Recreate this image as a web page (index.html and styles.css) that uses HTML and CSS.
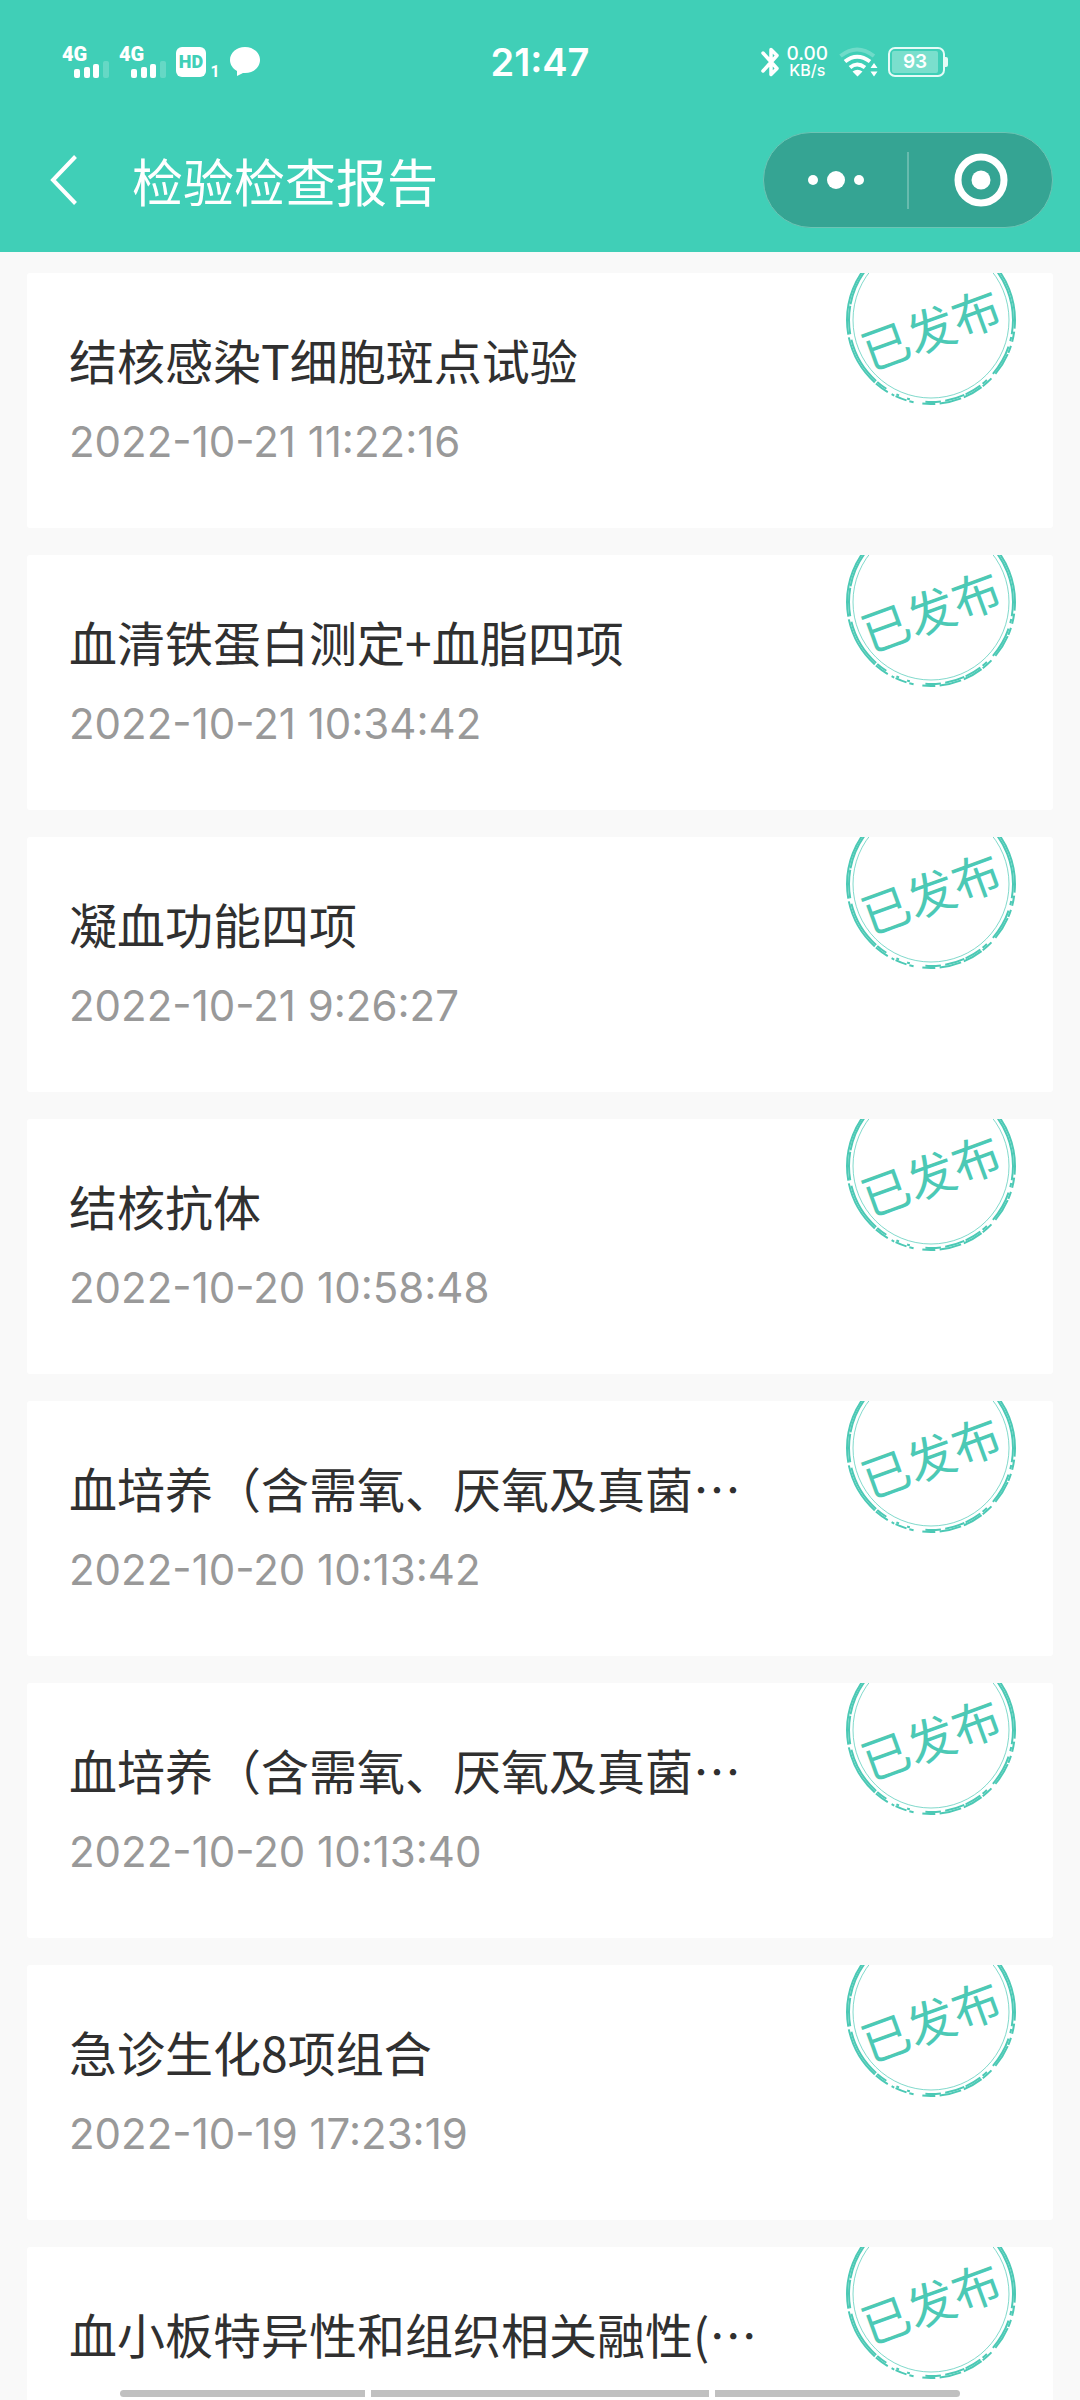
FILE: index.html
```html
<!DOCTYPE html>
<html lang="zh-CN">
<head>
    <meta charset="UTF-8">
    <meta name="viewport" content="width=device-width, initial-scale=1.0">
    <title>检验检查报告</title>
    <link rel="stylesheet" href="styles.css">
</head>
<body>
    <!-- shared stamp drawing, dashes are in degrees clockwise from 3 o'clock -->
    <svg class="defs" width="0" height="0" aria-hidden="true">
        <symbol id="stamp" viewBox="0 0 172 132">
            <g fill="none" stroke="#4cc9b5">
                <circle cx="86" cy="47" r="84" stroke-width="2" pathLength="360" stroke-dasharray="6 2 7 3 5 1 16 4 8 1 14 2 15 3 9 6 3 2 8 1 2 3 10 1 36 2 190 0"/>
                <circle cx="86" cy="47" r="82" stroke-width="2" pathLength="360" stroke-dasharray="10 2 3 4 22 6 4 2 12 1 14 3 11 11 2 6 2 8 8 1 34 4 20 1 169 0"/>
                <circle cx="86" cy="47" r="78" stroke-width="1" opacity="0.7"/>
            </g>
        </symbol>
    </svg>

    <div class="page">
        <header class="header">
            <div class="status">
                <div class="status-left">
                    <svg class="signal" width="48" height="34" viewBox="0 0 48 34">
                        <text x="0" y="16" class="net">4G</text>
                        <g fill="#fff"><rect x="12" y="24" width="6" height="9" rx="2"/><rect x="22" y="22" width="6" height="11" rx="2"/><rect x="31" y="19" width="6" height="14" rx="2"/><rect x="41" y="16" width="6" height="17" rx="2" opacity=".2"/></g>
                    </svg>
                    <svg class="signal" width="48" height="34" viewBox="0 0 48 34">
                        <text x="0" y="16" class="net">4G</text>
                        <g fill="#fff"><rect x="12" y="24" width="6" height="9" rx="2"/><rect x="22" y="22" width="6" height="11" rx="2"/><rect x="31" y="19" width="6" height="14" rx="2"/><rect x="41" y="16" width="6" height="17" rx="2" opacity=".2"/></g>
                    </svg>
                    <span class="hd">HD</span>
                    <span class="sim">1</span>
                    <svg width="30" height="30" viewBox="0 0 30 30"><path fill="#fff" d="M15 0C6.500 0 0 5.800 0 13c0 4.600 2.800 8.700 7 11v5l6-3h2c8.500 0 15-5.800 15-13S23.500 0 15 0z"/></svg>
                </div>
                <time class="clock">21:47</time>
                <div class="status-right">
                    <svg width="18" height="30" viewBox="0 0 18 30"><path d="M2 6L16 21.500L10 27.500V2.500L16 8.500L2 24" fill="none" stroke="#fff" stroke-width="3.500" stroke-linejoin="round" stroke-linecap="round"/></svg>
                    <div class="speed"><span>0.00</span><small>KB/s</small></div>
                    <svg class="wifi" width="40" height="30" viewBox="0 0 40 30">
                        <g fill="none" stroke="#fff" stroke-width="4">
                            <path d="M1.500 9Q18 -4 35 9" opacity=".25"/>
                            <path d="M6 14.500Q18 5 31 14.500"/>
                            <path d="M11 20.500Q18 14.500 26 20.500"/>
                        </g>
                        <path d="M18.500 29.500l-5-5q5-3.500 10 0zM35 16l3.500 5h-7zM35 29.500l3.500-5h-7z" fill="#fff"/>
                    </svg>
                    <div class="battery"><span>93</span></div>
                </div>
            </div>
            <nav class="nav">
                <button class="back" type="button" aria-label="返回">
                    <svg width="28" height="52" viewBox="0 0 28 52"><path d="M25.500 2.500L3 26l22.500 23.500" fill="none" stroke="#fff" stroke-width="4"/></svg>
                </button>
                <h1>检验检查报告</h1>
                <div class="capsule">
                    <button type="button" aria-label="更多">
                        <svg width="56" height="20" viewBox="0 0 56 20" fill="#fff"><circle cx="5" cy="10" r="5"/><circle cx="28" cy="10" r="9"/><circle cx="51" cy="10" r="5"/></svg>
                    </button>
                    <span class="line"></span>
                    <button type="button" aria-label="关闭">
                        <svg width="54" height="54" viewBox="0 0 54 54"><circle cx="27" cy="27" r="23" fill="none" stroke="#fff" stroke-width="7"/><circle cx="27" cy="27" r="9.500" fill="#fff"/></svg>
                    </button>
                </div>
            </nav>
        </header>

        <main class="list">
            <a class="card" href="#">
                <h2>结核感染T细胞斑点试验</h2>
                <p>2022-10-21 11:22:16</p>
                <div class="stamp"><svg><use href="#stamp"/></svg><span>已发布</span></div>
            </a>
            <a class="card" href="#">
                <h2>血清铁蛋白测定+血脂四项</h2>
                <p>2022-10-21 10:34:42</p>
                <div class="stamp"><svg><use href="#stamp"/></svg><span>已发布</span></div>
            </a>
            <a class="card" href="#">
                <h2>凝血功能四项</h2>
                <p>2022-10-21 9:26:27</p>
                <div class="stamp"><svg><use href="#stamp"/></svg><span>已发布</span></div>
            </a>
            <a class="card" href="#">
                <h2>结核抗体</h2>
                <p>2022-10-20 10:58:48</p>
                <div class="stamp"><svg><use href="#stamp"/></svg><span>已发布</span></div>
            </a>
            <a class="card" href="#">
                <h2>血培养（含需氧、厌氧及真菌…</h2>
                <p>2022-10-20 10:13:42</p>
                <div class="stamp"><svg><use href="#stamp"/></svg><span>已发布</span></div>
            </a>
            <a class="card" href="#">
                <h2>血培养（含需氧、厌氧及真菌…</h2>
                <p>2022-10-20 10:13:40</p>
                <div class="stamp"><svg><use href="#stamp"/></svg><span>已发布</span></div>
            </a>
            <a class="card" href="#">
                <h2>急诊生化8项组合</h2>
                <p>2022-10-19 17:23:19</p>
                <div class="stamp"><svg><use href="#stamp"/></svg><span>已发布</span></div>
            </a>
            <a class="card" href="#">
                <h2>血小板特异性和组织相关融性(…</h2>
                <div class="stamp"><svg><use href="#stamp"/></svg><span>已发布</span></div>
            </a>
        </main>

        <div class="gesture"><i></i><i class="wide"></i><i></i></div>
    </div>
</body>
</html>
```

FILE: styles.css
```css
* {
    margin: 0;
    padding: 0;
    box-sizing: border-box;
}

body {
    font-family: "Noto Sans CJK SC", sans-serif;
    background: #f9f9f9;
}

button {
    border: none;
    background: none;
    display: flex;
    align-items: center;
    justify-content: center;
}

svg {
    display: block;
    flex-shrink: 0;
}

.defs {
    position: absolute;
}

.page {
    position: relative;
    height: 100vh;
    display: flex;
    flex-direction: column;
    overflow: hidden;
}

.header {
    flex-shrink: 0;
    padding-bottom: 16px;
    background: #40cfb7;
    color: #fff;
}

/* status bar */
.status {
    display: grid;
    grid-template-columns: 1fr auto 1fr;
    align-items: center;
    height: 124px;
    padding: 0 62px;
    font-family: Inter, sans-serif;
}

.status-left,
.status-right {
    display: flex;
    align-items: center;
}

.status-left {
    gap: 9px;
}

.status-right {
    justify-content: flex-end;
    gap: 7px;
    padding-right: 70px;
}

.signal {
    overflow: visible;
}

.net {
    font-family: Roboto, sans-serif;
    font-size: 20px;
    font-weight: 900;
    fill: #fff;
}

.hd {
    width: 30px;
    height: 30px;
    border-radius: 6px;
    background: #fff;
    color: #40cfb7;
    font: 900 18px/30px Roboto, sans-serif;
    text-align: center;
}

.sim {
    align-self: flex-end;
    width: 12px;
    margin-left: -6px;
    font: 700 16px/14px Roboto, sans-serif;
    text-align: center;
}

.clock {
    font-size: 38px;
    font-weight: 600;
    line-height: 48px;
}

.speed {
    display: flex;
    flex-direction: column;
    align-items: center;
    font-weight: 500;
    font-size: 19px;
    line-height: 16px;
}

.speed small {
    font-size: 16px;
}

.wifi {
    margin-left: 4px;
}

.battery {
    position: relative;
    width: 57px;
    height: 30px;
    margin: 0 3px 0 2px;
    padding: 2px;
    border: 2px solid #e6fbf7;
    border-radius: 7px;
}

.battery span {
    display: block;
    width: 46px;
    height: 22px;
    border-radius: 2px;
    background: #7adfcd;
    font-size: 19px;
    font-weight: 600;
    line-height: 22px;
    text-align: center;
}

.battery::after {
    content: "";
    position: absolute;
    top: 8px;
    right: -5px;
    width: 3px;
    height: 10px;
    border-radius: 0 2px 2px 0;
    background: #e6fbf7;
}

/* nav bar */
.nav {
    display: flex;
    align-items: center;
    height: 112px;
    padding: 0 27px 0 50px;
}

.nav h1 {
    flex: 1;
    margin-left: 54px;
    font-size: 51px;
    font-weight: 400;
    line-height: 64px;
}

.capsule {
    display: flex;
    align-items: center;
    width: 290px;
    height: 96px;
    border: 1px solid #6cc4b4;
    border-radius: 48px;
    background: #35a493;
}

.capsule button {
    flex: 1;
    height: 94px;
}

.capsule .line {
    width: 2px;
    height: 57px;
    background: #68bbae;
}

/* report list */
.list {
    display: flex;
    flex-direction: column;
    gap: 27px;
    padding: 21px 27px;
}

.card {
    position: relative;
    flex-shrink: 0;
    height: 255px;
    padding: 54px 42px;
    border-radius: 3px;
    background: #fff;
    color: #303030;
    text-decoration: none;
    overflow: hidden;
}

.card h2 {
    font-size: 48px;
    font-weight: 400;
    line-height: 64px;
    white-space: nowrap;
}

.card p {
    margin-top: 24px;
    font-family: Inter, sans-serif;
    font-size: 42px;
    font-weight: 400;
    line-height: 54px;
    color: #999;
}

.stamp {
    position: absolute;
    top: 0;
    right: 36px;
    width: 172px;
    height: 132px;
}

.stamp svg {
    width: 172px;
    height: 132px;
}

.stamp span {
    position: absolute;
    top: 22px;
    left: 13px;
    width: 144px;
    font-size: 48px;
    line-height: 64px;
    text-align: center;
    color: #4cc9b5;
    transform: rotate(-20deg);
}

/* gesture bar over the content */
.gesture {
    position: absolute;
    left: 0;
    right: 0;
    bottom: 3px;
    display: flex;
    gap: 6px;
    padding: 0 120px;
}

.gesture i {
    flex: 245;
    height: 7px;
    background: #c0c0c0;
}

.gesture .wide {
    flex: 338;
}

.gesture i:first-child {
    border-radius: 4px 0 0 4px;
}

.gesture i:last-child {
    border-radius: 0 4px 4px 0;
}
```
